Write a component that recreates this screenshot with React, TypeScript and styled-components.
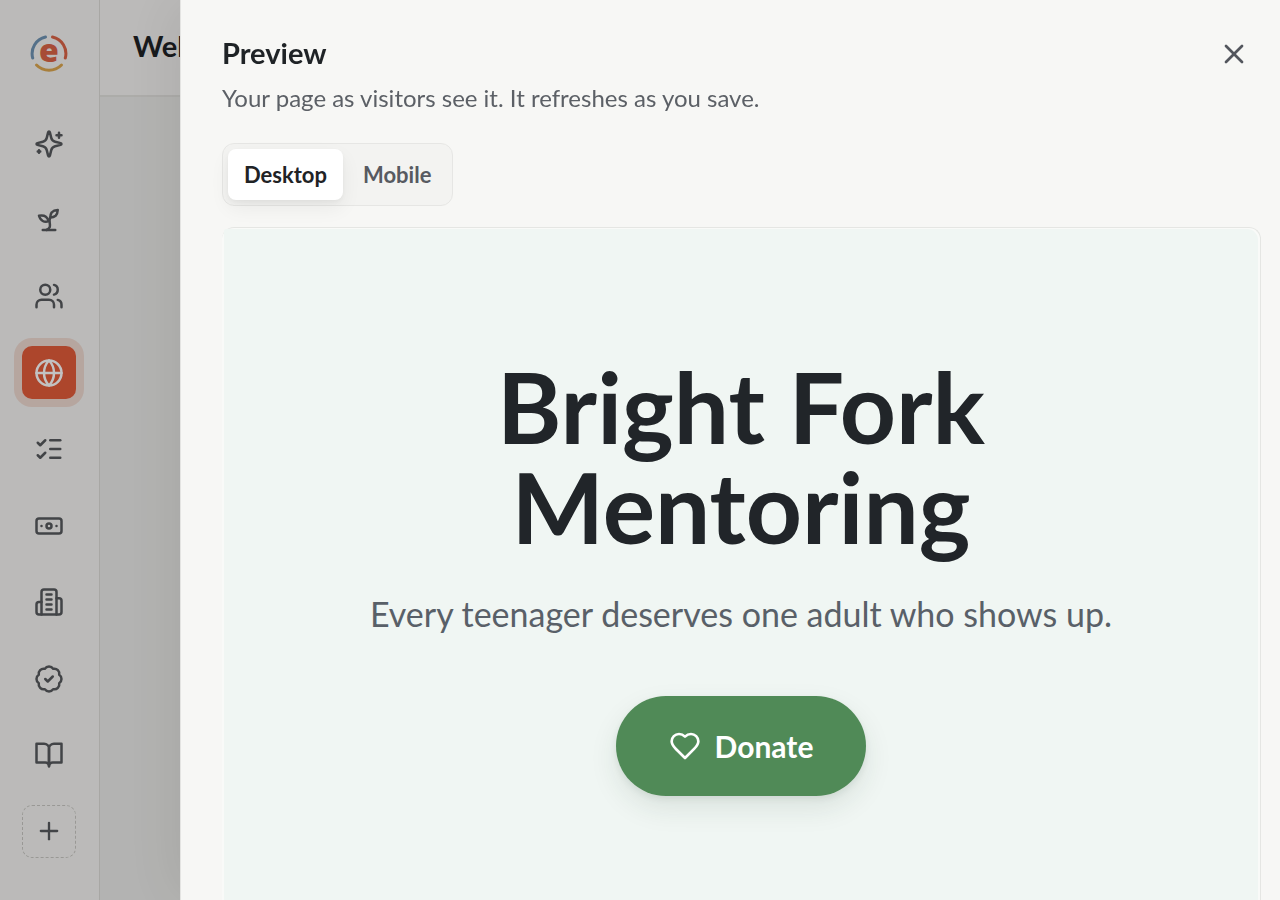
import React from "react";
import styled, { createGlobalStyle, css } from "styled-components";
import { BadgeCheck, Banknote, Globe, ListChecks, Plus, Users, X } from "lucide-react";

const GlobalStyle = createGlobalStyle`
  * { box-sizing: border-box; }
  html, body { margin: 0; }
  body {
    font-family: Lato, "Liberation Sans", sans-serif;
    color: #1f2326;
    background: #ececea;
    overflow: hidden;
  }
  h1, h2, p { margin: 0; }
  button { font: inherit; border: 0; padding: 0; background: none; cursor: pointer; }
`;

const Shell = styled.div`
  display: flex;
  min-height: 100vh;
`;

const Sidebar = styled.aside`
  display: flex;
  flex-direction: column;
  align-items: center;
  flex: 0 0 100px;
  height: 100vh;
  padding: 34px 1px 42px 0;
  background: #f6f5f3;
  border-right: 1px solid #dddcd8;
`;

const Logo = styled.a`
  display: flex;
  margin-bottom: 45px;
`;

const Nav = styled.nav`
  flex: 1;
  display: flex;
  flex-direction: column;
  justify-content: space-between;
`;

const NavButton = styled.button<{ $active?: boolean; $dashed?: boolean }>`
  display: flex;
  align-items: center;
  justify-content: center;
  width: 54px;
  height: 53px;
  border-radius: 10px;
  color: #575a5e;
  ${(p) => p.$active && css`
    color: #fff;
    background: #e45c3b;
    box-shadow: 0 0 0 8px #f0dad2;
  `}
  ${(p) => p.$dashed && css`
    border: 1px dashed #c9c8c4;
  `}
`;

const Main = styled.main`
  flex: 1;
`;

const TopBar = styled.header`
  display: flex;
  align-items: center;
  height: 97px;
  padding: 0 33px 3px;
  background: #f6f5f3;
  border-bottom: 2px solid #e3e2df;
`;

const PageTitle = styled.h1`
  font-size: 29px;
  line-height: 36px;
  font-weight: 700;
`;

const Backdrop = styled.div`
  position: fixed;
  inset: 0;
  background: rgba(0, 0, 0, 0.24);
`;

const Drawer = styled.section`
  position: fixed;
  inset: 0 0 0 180px;
  display: flex;
  flex-direction: column;
  padding: 34px 19px 0 41px;
  background: #f7f7f5;
  border-left: 1px solid #e4e4e2;
  box-shadow: -8px 0 56px rgba(0, 0, 0, 0.08);
  overflow: hidden;
`;

const DrawerHeader = styled.header`
  display: flex;
  justify-content: space-between;
  align-items: flex-start;
`;

const DrawerTitle = styled.h2`
  font-size: 29px;
  line-height: 38px;
  font-weight: 700;
`;

const DrawerText = styled.p`
  margin-top: 7px;
  font-size: 24px;
  line-height: 38px;
  color: #5c6066;
`;

const CloseButton = styled.button`
  display: flex;
  align-items: center;
  justify-content: center;
  width: 54px;
  height: 40px;
  color: #53565d;
`;

const Segmented = styled.div`
  display: flex;
  align-self: flex-start;
  gap: 4px;
  margin-top: 26px;
  padding: 5px;
  border: 1px solid #e6e6e4;
  border-radius: 12px;
  background: #f3f3f1;
`;

const Segment = styled.button<{ $selected?: boolean }>`
  height: 51px;
  padding: 0 16px;
  border-radius: 8px;
  font-size: 22px;
  line-height: 28px;
  font-weight: 700;
  color: #575a61;
  ${(p) => p.$selected && css`
    color: #1f2326;
    background: #fff;
    box-shadow: 0 8px 20px rgba(0, 0, 0, 0.06), 0 2px 4px rgba(0, 0, 0, 0.04);
  `}
`;

const Frame = styled.div`
  flex: 1;
  margin-top: 21px;
  padding: 1px 2px 0;
  border: solid #e5e6e3;
  border-width: 1px 1px 0 0;
  border-radius: 12px 12px 0 0;
  background: #f9faf8;
`;

const Site = styled.div`
  display: flex;
  flex-direction: column;
  align-items: center;
  height: 100%;
  padding: 127px 24px 0;
  border-radius: 2px 11px 0 0;
  background: #f0f6f3;
  text-align: center;
`;

const SiteTitle = styled.h2`
  max-width: 640px;
  font-size: 98px;
  line-height: 100px;
  font-weight: 700;
  color: #212529;
`;

const SiteLead = styled.p`
  margin-top: 33px;
  font-size: 34px;
  line-height: 50px;
  color: #596068;
`;

const Donate = styled.button`
  display: flex;
  align-items: center;
  gap: 14px;
  height: 100px;
  margin-top: 57px;
  padding: 0 53px;
  border-radius: 50px;
  font-size: 30px;
  line-height: 40px;
  font-weight: 700;
  color: #fff;
  background: #508a57;
  box-shadow: 0 12px 28px rgba(31, 60, 40, 0.1), 0 3px 6px rgba(31, 60, 40, 0.08);
`;

const LogoLetter = styled.text`
  font-family: "Open Sans", sans-serif;
  font-size: 32px;
  font-weight: 800;
  fill: #dc6547;
  stroke: none;
`;

const LogoMark = () => (
  <svg width="38" height="38" viewBox="0 0 38 38" fill="none" strokeWidth="3" strokeLinecap="round">
    <path d="M15.5 3 A17 17 0 0 0 2.7 24" stroke="#6f94b5" />
    <path d="M22.5 3 A17 17 0 0 1 35.3 24" stroke="#dc6547" />
    <path d="M6.5 31 A17.5 17.5 0 0 0 31.5 31" stroke="#dda750" />
    <LogoLetter x="19" y="28" textAnchor="middle">e</LogoLetter>
  </svg>
);

const Glyph = ({ children, size = 30 }: { children: React.ReactNode; size?: number }) => (
  <svg width={size} height={size} viewBox="0 0 24 24" fill="none" stroke="currentColor" strokeWidth="2" strokeLinecap="round" strokeLinejoin="round" aria-hidden="true">
    {children}
  </svg>
);

const SparkleIcon = () => (
  <Glyph>
    <path d="M12 2 C12.4 2 12.6 2.3 12.7 2.7 L13.8 7.1 C14.3 9 15 9.7 16.9 10.2 L21.3 11.3 C22.2 11.6 22.2 12.4 21.3 12.7 L16.9 13.8 C15 14.3 14.3 15 13.8 16.9 L12.7 21.3 C12.4 22.2 11.6 22.2 11.3 21.3 L10.2 16.9 C9.7 15 9 14.3 7.1 13.8 L2.7 12.7 C1.8 12.4 1.8 11.6 2.7 11.3 L7.1 10.2 C9 9.7 9.7 9 10.2 7.1 L11.3 2.7 C11.4 2.3 11.6 2 12 2 Z" />
    <path d="M20 3 V7 M22 5 H18 M4 17 V19 M5 18 H3" />
  </Glyph>
);

const SproutIcon = () => (
  <Glyph>
    <path d="M7 20h10" />
    <path d="M10 20c5.5-2.5.8-6.4 3-10" />
    <path d="M9.5 9.4c1.1.8 1.8 2.2 2.3 3.7-2 .4-3.5.4-4.8-.3-1.2-.6-2.3-1.9-3-4.2 2.8-.5 4.4 0 5.5.8z" />
    <path d="M14.1 6a7 7 0 0 0-1.1 4c1.9-.1 3.3-.6 4.3-1.4 1-1 1.6-2.3 1.7-4.6-2.7.1-4 1-4.9 2z" />
  </Glyph>
);

const BuildingIcon = () => (
  <Glyph>
    <path d="M6 22 V4 A2 2 0 0 1 8 2 H16 A2 2 0 0 1 18 4 V22 Z" />
    <path d="M6 12 H4 A2 2 0 0 0 2 14 V20 A2 2 0 0 0 4 22 H6 M18 9 H20 A2 2 0 0 1 22 11 V20 A2 2 0 0 1 20 22 H18" />
    <path d="M10 6 H14 M10 10 H14 M10 14 H14 M10 18 H14" />
  </Glyph>
);

const BookIcon = () => (
  <Glyph>
    <path d="M2 3 H8 A4 4 0 0 1 12 7 V21 A3 3 0 0 0 9 18 H2 Z" />
    <path d="M22 3 H16 A4 4 0 0 0 12 7 V21 A3 3 0 0 1 15 18 H22 Z" />
  </Glyph>
);

const HeartIcon = () => (
  <Glyph size={32}>
    <path d="M19 14c1.49-1.46 3-3.21 3-5.5A5.5 5.5 0 0 0 16.5 3c-1.76 0-3 .5-4.5 2-1.5-1.5-2.74-2-4.5-2A5.5 5.5 0 0 0 2 8.5c0 2.3 1.5 4.05 3 5.5l7 7Z" />
  </Glyph>
);

const navItems = [
  { label: "Assistant", icon: <SparkleIcon /> },
  { label: "Programs", icon: <SproutIcon /> },
  { label: "People", icon: <Users size={30} /> },
  { label: "Website", icon: <Globe size={30} />, active: true },
  { label: "Tasks", icon: <ListChecks size={30} /> },
  { label: "Donations", icon: <Banknote size={30} /> },
  { label: "Organization", icon: <BuildingIcon /> },
  { label: "Compliance", icon: <BadgeCheck size={30} /> },
  { label: "Library", icon: <BookIcon /> },
];

export default function App() {
  return (
    <>
      <GlobalStyle />
      <Shell>
        <Sidebar>
          <Logo href="#" aria-label="Home"><LogoMark /></Logo>
          <Nav>
            {navItems.map((item) => (
              <NavButton key={item.label} aria-label={item.label} $active={item.active}>
                {item.icon}
              </NavButton>
            ))}
            <NavButton aria-label="Add" $dashed><Plus size={28} /></NavButton>
          </Nav>
        </Sidebar>
        <Main>
          <TopBar><PageTitle>Web</PageTitle></TopBar>
        </Main>
      </Shell>
      <Backdrop />
      <Drawer role="dialog" aria-label="Preview">
        <DrawerHeader>
          <div>
            <DrawerTitle>Preview</DrawerTitle>
            <DrawerText>Your page as visitors see it. It refreshes as you save.</DrawerText>
          </div>
          <CloseButton aria-label="Close"><X size={32} /></CloseButton>
        </DrawerHeader>
        <Segmented>
          <Segment $selected aria-pressed="true">Desktop</Segment>
          <Segment aria-pressed="false">Mobile</Segment>
        </Segmented>
        <Frame>
          <Site>
            <SiteTitle>Bright Fork Mentoring</SiteTitle>
            <SiteLead>Every teenager deserves one adult who shows up.</SiteLead>
            <Donate><HeartIcon />Donate</Donate>
          </Site>
        </Frame>
      </Drawer>
    </>
  );
}
